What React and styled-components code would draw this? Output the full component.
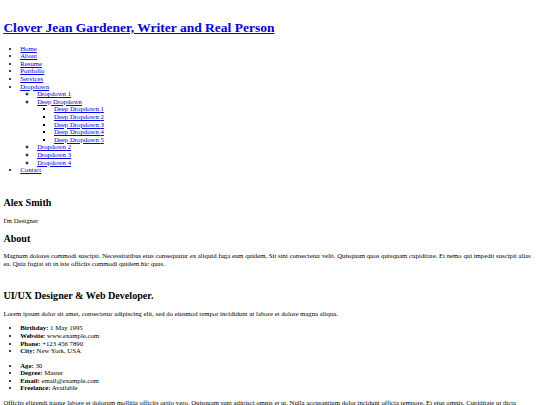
import React from 'react'
import styled, { createGlobalStyle } from 'styled-components'

// the page is a plain, unstyled document photographed at 1280px and shrunk
const GlobalStyle = createGlobalStyle`
    html{
        zoom: 0.421875;
    }
    body{
        margin: 8px;
        background: #ffffff;
        color: #000000;
        font-family: "Liberation Serif", "Times New Roman", serif;
        font-size: 16px;
        line-height: 18px;
    }
    a{
        color: #0000ee;
        text-decoration: underline;
    }
`

const Header = styled.header`
    /* room of the missing profile picture */
    padding-top: 18px;
`

const SiteTitle = styled.h1`
    font-size: 32px;
    line-height: 37px;
    font-weight: bold;
    margin: 21.44px 0;
`

const NavList = styled.ul`
    margin: ${p => (p.$nested ? '0' : '16px 0')};
    padding-left: 40px;
    list-style-type: ${p => p.$marker || 'disc'};
`

const Hero = styled.section`
    padding-top: 19px;
`

const HeroName = styled.h1`
    font-size: 24px;
    line-height: 27px;
    margin: 19.92px 0;
`

const Text = styled.p`
    margin: 16px 0;
`

const SectionTitle = styled.h2`
    font-size: 24px;
    line-height: 27px;
    margin: 19.92px 0;
`

const Content = styled.div`
    /* room of the missing portrait */
    padding-top: 18px;
`

const FactList = styled.ul`
    margin: 16px 0;
    padding-left: 40px;
    list-style-type: disc;
`

const deepItems = [1, 2, 3, 4, 5]
const leftFacts = [
    ['Birthday:', '1 May 1995'],
    ['Website:', 'www.example.com'],
    ['Phone:', '+123 456 7890'],
    ['City:', 'New York, USA'],
]
const rightFacts = [
    ['Age:', '30'],
    ['Degree:', 'Master'],
    ['Email:', 'email@example.com'],
    ['Freelance:', 'Available'],
]

const Facts = ({ items }) => (
    <FactList>
        {items.map(([label, value]) => (
            <li key={label}>
                <strong>{label}</strong> <span>{value}</span>
            </li>
        ))}
    </FactList>
)

const App = () => {
    return (
        <>
            <GlobalStyle />
            <Header>
                <SiteTitle>
                    <a href="#">Clover Jean Gardener, Writer and Real Person</a>
                </SiteTitle>
                <nav>
                    <NavList>
                        <li><a href="#">Home</a></li>
                        <li><a href="#">About</a></li>
                        <li><a href="#">Resume</a></li>
                        <li><a href="#">Portfolio</a></li>
                        <li><a href="#">Services</a></li>
                        <li>
                            <a href="#">Dropdown</a>
                            <NavList $nested $marker="circle">
                                <li><a href="#">Dropdown 1</a></li>
                                <li>
                                    <a href="#">Deep Dropdown</a>
                                    <NavList $nested $marker="square">
                                        {deepItems.map(n => (
                                            <li key={n}><a href="#">Deep Dropdown {n}</a></li>
                                        ))}
                                    </NavList>
                                </li>
                                <li><a href="#">Dropdown 2</a></li>
                                <li><a href="#">Dropdown 3</a></li>
                                <li><a href="#">Dropdown 4</a></li>
                            </NavList>
                        </li>
                        <li><a href="#">Contact</a></li>
                    </NavList>
                </nav>
            </Header>

            <main>
                <Hero>
                    <HeroName>Alex Smith</HeroName>
                    <Text>I'm <span>Designer</span></Text>
                </Hero>

                <section>
                    <SectionTitle>About</SectionTitle>
                    <Text>
                        Magnum dolores commodi suscipit. Necessitatibus eius consequatur ex aliquid fuga eum quidem. Sit sint consectetur velit. Quisquam quos quisquam cupiditate. Et nemo qui impedit suscipit alias ea. Quia fugiat sit in iste officiis commodi quidem hic quas.
                    </Text>
                    <Content>
                        <SectionTitle>UI/UX Designer &amp; Web Developer.</SectionTitle>
                        <Text>
                            Lorem ipsum dolor sit amet, consectetur adipiscing elit, sed do eiusmod tempor incididunt ut labore et dolore magna aliqua.
                        </Text>
                        <Facts items={leftFacts} />
                        <Facts items={rightFacts} />
                        <Text>
                            Officiis eligendi itaque labore et dolorum mollitia officiis optio vero. Quisquam sunt adipisci omnis et ut. Nulla accusantium dolor incidunt officia tempore. Et eius omnis. Cupiditate ut dicta maxime officiis quidem quia. Sed et consectetur qui quia repellendus itaque neque. Aliquid amet quidem ut quaerat cupiditate. Ab et eum qui repellendus omnis culpa magni laudantium dolores.
                        </Text>
                    </Content>
                </section>
            </main>
        </>
    )
}

export default App
